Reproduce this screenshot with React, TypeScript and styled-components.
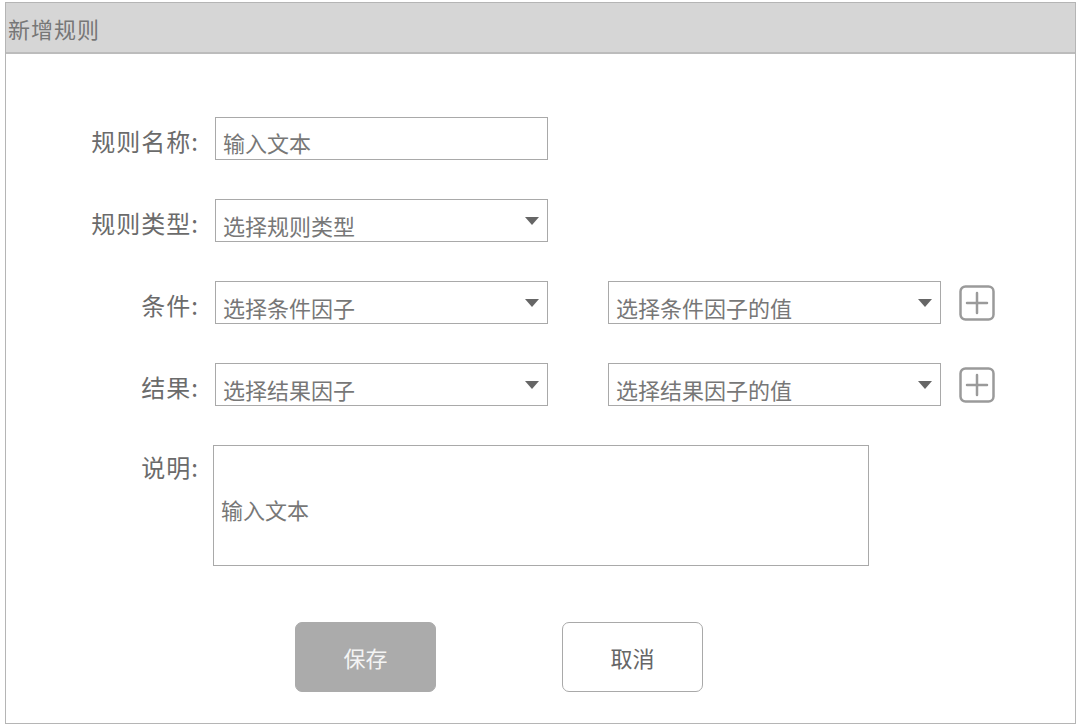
import React from 'react';
import styled, { createGlobalStyle } from 'styled-components';

const GlobalStyle = createGlobalStyle`
  html, body {
    margin: 0;
    padding: 0;
    background: #ffffff;
  }
  body {
    font-family: "Noto Sans CJK SC", "Noto Sans", sans-serif;
  }
  * {
    box-sizing: border-box;
  }
`;

const FIELD_WIDTH = 333;

const App: React.FC = () => {
  return (
    <>
      <GlobalStyle />
      <Frame>
        <Header>新增规则</Header>
        <Body>
          <Row>
            <Label>规则名称:</Label>
            <TextBox>输入文本</TextBox>
          </Row>
          <Row>
            <Label>规则类型:</Label>
            <Select placeholder="选择规则类型" />
          </Row>
          <Row>
            <Label>条件:</Label>
            <Select placeholder="选择条件因子" />
            <Select placeholder="选择条件因子的值" offset={60} />
            <PlusButton />
          </Row>
          <Row>
            <Label>结果:</Label>
            <Select placeholder="选择结果因子" />
            <Select placeholder="选择结果因子的值" offset={60} />
            <PlusButton />
          </Row>
          <Row top>
            <Label top>说明:</Label>
            <TextArea>输入文本</TextArea>
          </Row>
          <Actions>
            <Button primary>保存</Button>
            <Button>取消</Button>
          </Actions>
        </Body>
      </Frame>
    </>
  );
};

const Select: React.FC<{ placeholder: string; offset?: number }> = ({
  placeholder,
  offset = 0,
}) => (
  <SelectBox style={offset ? { marginLeft: offset } : undefined}>
    <span>{placeholder}</span>
    <Caret />
  </SelectBox>
);

const PlusButton: React.FC = () => (
  <PlusWrap>
    <svg width="36" height="36" viewBox="0 0 36 36" fill="none">
      <rect
        x="1.5"
        y="1.5"
        width="33"
        height="33"
        rx="5"
        stroke="#9a9a9a"
        strokeWidth="2.5"
      />
      <path
        d="M18 8v20M8 18h20"
        stroke="#9a9a9a"
        strokeWidth="2.5"
        strokeLinecap="round"
      />
    </svg>
  </PlusWrap>
);

const Frame = styled.div`
  margin: 2px 4px 0 5px;
  width: 1071px;
  height: 722px;
  border: 1px solid #b5b5b5;
  display: flex;
  flex-direction: column;
`;

const Header = styled.div`
  height: 51px;
  background: #d6d6d6;
  border-bottom: 2px solid #bcbcbc;
  display: flex;
  align-items: center;
  padding-left: 2px;
  font-size: 22px;
  color: #777777;
  letter-spacing: 1px;
`;

const Body = styled.div`
  padding-top: 63px;
  display: flex;
  flex-direction: column;
`;

const Row = styled.div<{ top?: boolean }>`
  display: flex;
  align-items: ${(p) => (p.top ? 'flex-start' : 'center')};
  margin-bottom: 39px;
`;

const Label = styled.div<{ top?: boolean }>`
  width: 193px;
  margin-right: ${(p) => (p.top ? '14px' : '16px')};
  padding-top: ${(p) => (p.top ? '7px' : '5px')};
  text-align: right;
  font-size: 24px;
  letter-spacing: 1px;
  color: #6b6b6b;
  line-height: 30px;
`;

const TextBox = styled.div`
  width: ${FIELD_WIDTH}px;
  height: 43px;
  border: 1px solid #a9a9a9;
  display: flex;
  align-items: center;
  padding: 6px 0 0 7px;
  font-size: 22px;
  color: #777777;
`;

const SelectBox = styled.div`
  width: ${FIELD_WIDTH}px;
  height: 43px;
  border: 1px solid #a9a9a9;
  display: flex;
  align-items: center;
  justify-content: space-between;
  padding: 9px 8px 0 7px;
  font-size: 22px;
  color: #777777;
`;

const Caret = styled.span`
  width: 0;
  height: 0;
  margin-top: -9px;
  border-left: 7px solid transparent;
  border-right: 7px solid transparent;
  border-top: 8px solid #666666;
`;

const PlusWrap = styled.div`
  margin-left: 18px;
  display: flex;
`;

const TextArea = styled.div`
  width: 656px;
  height: 121px;
  border: 1px solid #a9a9a9;
  display: flex;
  align-items: center;
  padding: 6px 0 0 7px;
  font-size: 22px;
  color: #777777;
`;

const Actions = styled.div`
  display: flex;
  gap: 126px;
  padding-left: 289px;
  margin-top: 17px;
`;

const Button = styled.div<{ primary?: boolean }>`
  width: 141px;
  height: 70px;
  border-radius: 7px;
  display: flex;
  align-items: center;
  justify-content: center;
  font-size: 22px;
  background: ${(p) => (p.primary ? '#ababab' : '#ffffff')};
  color: ${(p) => (p.primary ? '#f4f4f4' : '#666666')};
  border: 1px solid ${(p) => (p.primary ? '#ababab' : '#a9a9a9')};
`;

export default App;
